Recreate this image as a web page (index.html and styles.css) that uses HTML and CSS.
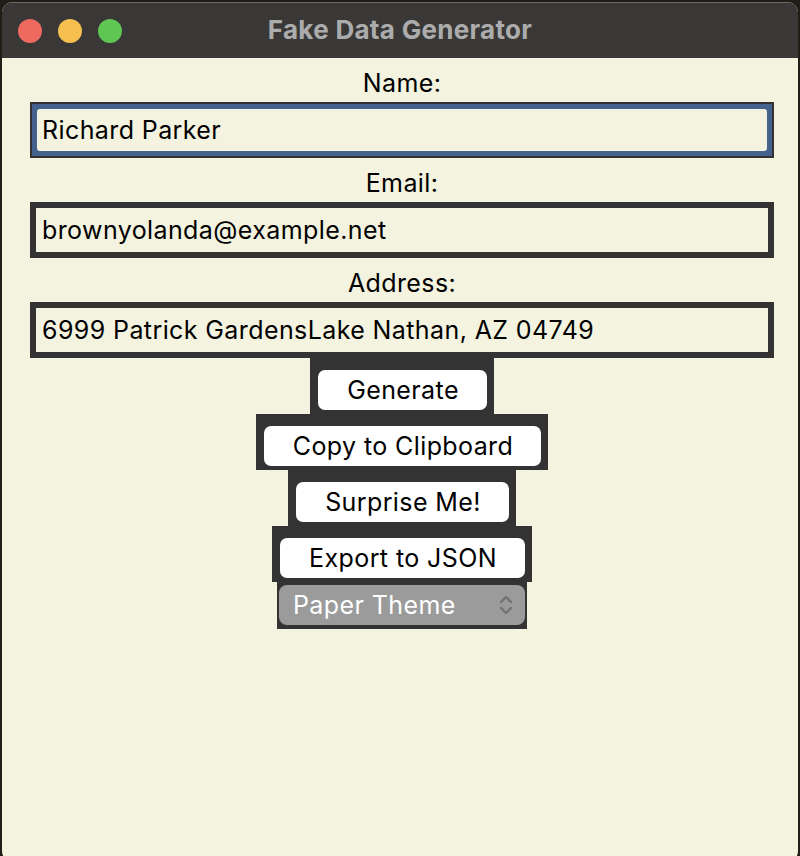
FILE: index.html
```html
<!DOCTYPE html>
<html lang="en">
<head>
<meta charset="utf-8">
<title>Fake Data Generator</title>
<link rel="stylesheet" href="styles.css">
</head>
<body>
<div class="window">
  <div class="titlebar">
    <div class="lights">
      <span class="light red"></span>
      <span class="light yellow"></span>
      <span class="light green"></span>
    </div>
    <div class="title">Fake Data Generator</div>
  </div>
  <div class="content">
    <div class="label">Name:</div>
    <div class="entry focus"><div class="entry-inner">Richard Parker</div></div>
    <div class="label">Email:</div>
    <div class="entry"><div class="entry-inner">brownyolanda@example.net</div></div>
    <div class="label">Address:</div>
    <div class="entry"><div class="entry-inner">6999 Patrick GardensLake Nathan, AZ 04749</div></div>
    <div class="btn-frame"><div class="btn">Generate</div></div>
    <div class="btn-frame"><div class="btn">Copy to Clipboard</div></div>
    <div class="btn-frame"><div class="btn">Surprise Me!</div></div>
    <div class="btn-frame"><div class="btn">Export to JSON</div></div>
    <div class="select-frame">
      <div class="select">
        <span class="select-text">Paper Theme</span>
        <svg class="chevrons" width="14" height="24" viewBox="0 0 14 24">
          <path d="M2 9 L7 4 L12 9" fill="none" stroke="#727272" stroke-width="2.4" stroke-linecap="round" stroke-linejoin="round"/>
          <path d="M2 15 L7 20 L12 15" fill="none" stroke="#727272" stroke-width="2.4" stroke-linecap="round" stroke-linejoin="round"/>
        </svg>
      </div>
    </div>
  </div>
</div>
</body>
</html>
```
FILE: styles.css
```css
html, body {
  margin: 0;
  padding: 0;
}
body {
  width: 800px;
  height: 856px;
  background: #1e1d16;
  overflow: hidden;
  font-family: Inter, "Liberation Sans", Arial, sans-serif;
}
.window {
  margin: 2px 2px 0 2px;
  width: 796px;
  height: 860px;
  border-radius: 11px;
  overflow: hidden;
  background: #f3f3df;
  display: flex;
  flex-direction: column;
}
.titlebar {
  height: 56px;
  flex: none;
  background: #393837;
  border-top: 1px solid #6a6a6a;
  box-sizing: border-box;
  display: flex;
  align-items: center;
  position: relative;
}
.lights {
  display: flex;
  gap: 16px;
  padding-left: 16px;
}
.light {
  width: 24px;
  height: 24px;
  border-radius: 50%;
  display: block;
}
.red { background: #ee6a5f; }
.yellow { background: #f5bf4f; }
.green { background: #5fc553; }
.title {
  position: absolute;
  left: 0;
  right: 0;
  top: 0;
  bottom: 3px;
  display: flex;
  align-items: center;
  justify-content: center;
  color: #acacac;
  font-weight: 700;
  font-size: 26px;
  letter-spacing: 0.3px;
}
.content {
  flex: 1;
  display: flex;
  flex-direction: column;
  align-items: center;
  padding: 0 24px 0 28px;
}
.label {
  height: 44px;
  line-height: 50px;
  font-size: 25px;
  letter-spacing: 0.4px;
  color: #000;
  text-align: center;
}
.entry {
  align-self: stretch;
  height: 56px;
  box-sizing: border-box;
  border: 6px solid #333333;
  background: #f3f3df;
}
.entry.focus {
  border-width: 2px;
  background: #45618e;
  padding: 5px;
}
.entry-inner {
  height: 100%;
  box-sizing: border-box;
  background: #f3f3df;
  padding-left: 6px;
  display: flex;
  align-items: center;
  font-size: 25px;
  letter-spacing: 0.4px;
  color: #000;
}
.entry.focus .entry-inner {
  border-radius: 3px;
  padding-left: 5px;
}
.btn-frame {
  background: #333333;
  padding: 12px 7px 4px 8px;
}
.btn {
  background: #ffffff;
  border-radius: 7px;
  height: 40px;
  padding: 0 28px 0 29px;
  display: flex;
  align-items: center;
  justify-content: center;
  font-size: 25px;
  letter-spacing: 0.4px;
  color: #000;
}
.select-frame {
  background: #333333;
  padding: 3px 2px 4px 2px;
}
.select {
  width: 246px;
  height: 40px;
  box-sizing: border-box;
  background: #9b9b9b;
  border-radius: 8px;
  display: flex;
  align-items: center;
  justify-content: space-between;
  padding: 0 12px 0 14px;
}
.select-text {
  color: #ffffff;
  font-size: 25px;
  letter-spacing: 0.4px;
}
.chevrons {
  display: block;
}
```
